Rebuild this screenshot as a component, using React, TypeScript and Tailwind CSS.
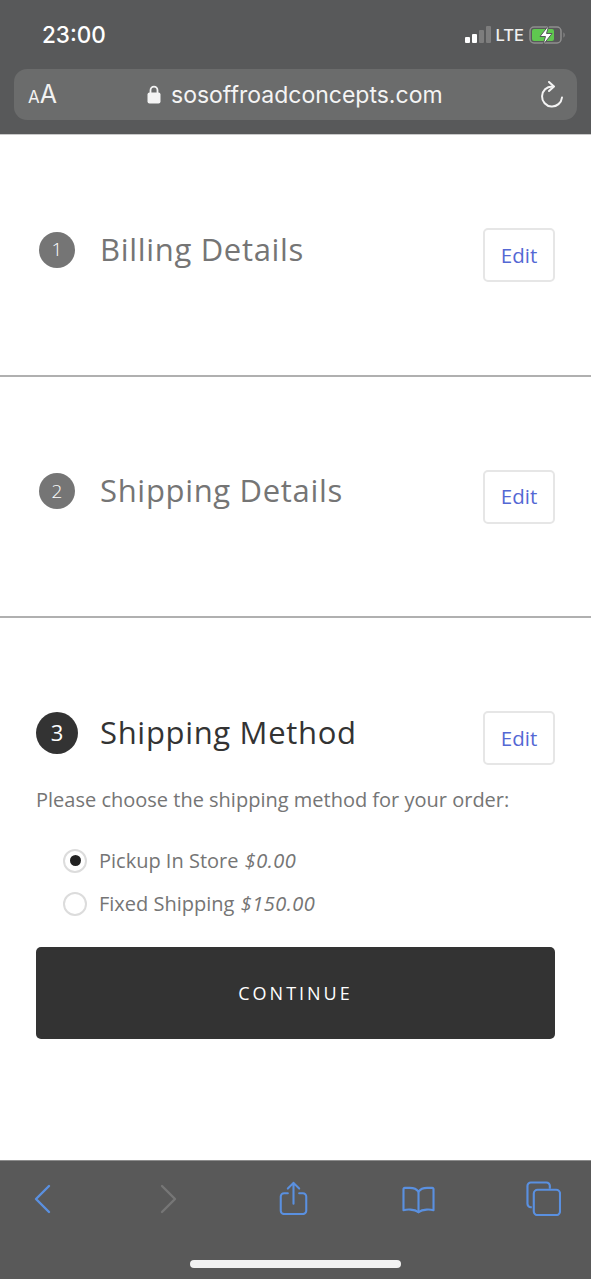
import React from 'react';

const openSans = "font-['Open_Sans',sans-serif]";

const Section = ({ n, title, active }: { n: number; title: string; active?: boolean }) => (
  <div className="flex items-center justify-between pl-[36px] pr-[36px]">
    <div className="flex items-center -mt-[11px]">
      <div className="w-[42px] flex justify-center">
        <div
          className={`rounded-full flex items-center justify-center text-white ${
            active ? 'w-[42px] h-[42px] bg-[#333333] text-[22px]' : 'w-[36px] h-[36px] bg-[#757575] text-[19px] font-light'
          }`}
        >
          {n}
        </div>
      </div>
      <h2 className={`ml-[22px] text-[31px] leading-[40px] tracking-[0.68px] pb-[2px] ${active ? 'text-[#333333]' : 'text-[#757575]'}`}>
        {title}
      </h2>
    </div>
    <button className="w-[72px] h-[54px] rounded-[5px] border-2 border-[#e6e6e6] bg-white text-[#5468d4] text-[20.5px]">
      Edit
    </button>
  </div>
);

const Radio = ({ checked, label, price }: { checked?: boolean; label: string; price: string }) => (
  <label className="flex items-center h-[43px] pl-[27px]">
    <span className="w-[24px] h-[24px] rounded-full border-2 border-[#dcdcdc] bg-white flex items-center justify-center">
      {checked && <span className="w-[11px] h-[11px] rounded-full bg-[#222222]" />}
    </span>
    <span className="ml-[12px] text-[20px] text-[#757575]">
      {label} <em className="italic ml-[1px] tracking-[0.5px]">{price}</em>
    </span>
  </label>
);

export default function App() {
  return (
    <div className={`w-[591px] h-[1279px] flex flex-col bg-white overflow-hidden ${openSans}`}>
      {/* browser top */}
      <div className="h-[135px] bg-[#58595a] border-b border-[#c9c9c9] font-['Inter',sans-serif] shrink-0">
        <div className="h-[69px] flex items-start justify-between pl-[42px] pr-[24px] pt-[21px]">
          <span className="text-white text-[22.5px] leading-[28px] font-medium">23:00</span>
          <div className="flex items-center h-[28px]">
            <svg width="34" height="18" viewBox="0 0 34 18" className="mr-[3px]">
              <rect x="0" y="11" width="5" height="6" rx="1" fill="#ffffff" />
              <rect x="7" y="8" width="5" height="9" rx="1" fill="#ffffff" />
              <rect x="14" y="4" width="5" height="13" rx="1" fill="#7d7d7d" />
              <rect x="21" y="0" width="5" height="17" rx="1" fill="#7d7d7d" />
            </svg>
            <span className="text-[#f0f0f0] text-[16.5px] leading-[20px] -ml-[6px] font-medium">LTE</span>
            <svg width="38" height="20" viewBox="0 0 38 20" className="ml-[5px]">
              <rect x="1" y="2" width="31" height="16" rx="4" fill="none" stroke="#8f8f8f" strokeWidth="1.5" />
              <rect x="3" y="4" width="22" height="12" rx="2" fill="#5fc84f" />
              <path d="M34.5 7.5c1.500.6 1.500 4.400 0 5z" fill="#8f8f8f" />
              <path d="M20 0 11 11.500h5.500L14 20l9-11.500h-5.500z" fill="#ffffff" stroke="#58595a" strokeWidth="1" />
            </svg>
          </div>
        </div>
        <div className="mx-[14px] h-[51px] rounded-[13px] bg-[#6b6c6c] flex items-center pl-[14px] pr-[12px] text-white">
          <span className="w-[119px] text-[#f2f2f2] leading-none">
            <span className="text-[17px]">A</span>
            <span className="text-[25px]">A</span>
          </span>
          <span className="flex-1 flex items-center text-[#f4f4f4]">
            <svg width="14" height="19" viewBox="0 0 14 19" className="mr-[10px]">
              <path d="M3.500 8V5.200a3.500 3.500 0 0 1 7 0V8" fill="none" stroke="#f4f4f4" strokeWidth="1.8" />
              <rect x="0.5" y="7.5" width="13" height="11" rx="2" fill="#f4f4f4" />
            </svg>
            <span className="text-[23px] leading-[30px]">sosoffroadconcepts.com</span>
          </span>
          <svg width="26" height="28" viewBox="0 0 26 28" fill="none" stroke="#f4f4f4" strokeWidth="2" strokeLinecap="round" strokeLinejoin="round">
            <path d="M13 5.500a10 10 0 1 0 10 11" />
            <path d="M10 1l5 4.500-5 4.500" />
          </svg>
        </div>
      </div>

      {/* checkout */}
      <div className="flex-1">
        <div className="h-[242px] flex flex-col justify-center border-b-2 border-[#b0b0b0]">
          <Section n={1} title="Billing Details" />
        </div>
        <div className="h-[241px] flex flex-col justify-center border-b-2 border-[#b0b0b0]">
          <Section n={2} title="Shipping Details" />
        </div>
        <div className="pt-[93px]">
          <Section n={3} title="Shipping Method" active />
          <p className="mt-[20px] pl-[36px] text-[20px] leading-[30px] text-[#757575]">
            Please choose the shipping method for your order:
          </p>
          <div className="mt-[24px] pl-[36px]">
            <Radio checked label="Pickup In Store" price="$0.00" />
            <Radio label="Fixed Shipping" price="$150.00" />
          </div>
          <button className="block mt-[22px] ml-[36px] w-[519px] h-[92px] rounded-[5px] bg-[#333333] text-white text-[18px] tracking-[3px]">
            CONTINUE
          </button>
        </div>
      </div>

      {/* browser bottom */}
      <div className="h-[119px] bg-[#595959] border-t border-[#8c8c8c] shrink-0 flex flex-col">
        <div className="h-[90px] flex items-start gap-[89px] pl-[25px] pt-[20px]">
          <span className="w-[36px] flex justify-center">
            <svg width="22" height="36" viewBox="0 0 22 36" fill="none" stroke="#5a90e0" strokeWidth="2.4" strokeLinecap="round" strokeLinejoin="round">
              <path d="M17 5 4 18l13 13" />
            </svg>
          </span>
          <span className="w-[36px] flex justify-center">
            <svg width="22" height="36" viewBox="0 0 22 36" fill="none" stroke="#767676" strokeWidth="2.4" strokeLinecap="round" strokeLinejoin="round">
              <path d="m5 5 13 13L5 31" />
            </svg>
          </span>
          <span className="w-[36px] flex justify-center">
            <svg width="29" height="34" viewBox="0 0 30 36" fill="none" stroke="#5a90e0" strokeWidth="2.2" strokeLinecap="round" strokeLinejoin="round">
              <path d="M9 13H5a3.500 3.500 0 0 0-3.500 3.500v15A3.500 3.500 0 0 0 5 35h20a3.500 3.500 0 0 0 3.500-3.500v-15A3.500 3.500 0 0 0 25 13h-4" />
              <path d="M15 24V2M9 8l6-6 6 6" />
            </svg>
          </span>
          <span className="w-[36px] flex justify-center mt-[4px]">
            <svg width="33" height="31" viewBox="0 0 34 32" fill="none" stroke="#5a90e0" strokeWidth="2.2" strokeLinecap="round" strokeLinejoin="round">
              <path d="M17 7c-2-3-5-4-9-4H3c-1 0-1.500.6-1.500 1.500V26c3-.8 11-1.500 15.500 2 4.500-3.500 12.500-2.800 15.500-2V4.500C32.500 3.600 32 3 31 3h-5c-4 0-7 1-9 4z" />
              <path d="M17 7v21" />
            </svg>
          </span>
          <span className="w-[36px] flex justify-center">
            <svg width="35" height="35" viewBox="0 0 36 36" fill="none" stroke="#5a90e0" strokeWidth="2.2" strokeLinejoin="round">
              <path d="M6 27H5a3.500 3.500 0 0 1-3.500-3.500V5A3.500 3.500 0 0 1 5 1.500h16A3.500 3.500 0 0 1 24.500 5v3" />
              <rect x="8" y="9" width="27" height="26" rx="4" />
            </svg>
          </span>
        </div>
        <div className="flex justify-center mt-[9px]">
          <div className="w-[211px] h-[8px] rounded-full bg-[#f2f2f2]" />
        </div>
      </div>
    </div>
  );
}
